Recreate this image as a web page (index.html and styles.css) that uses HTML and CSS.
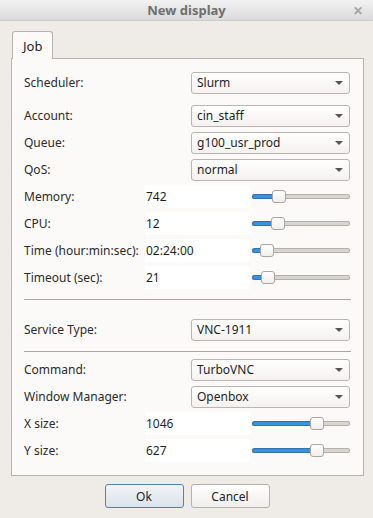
FILE: index.html
```html
<!DOCTYPE html>
<html lang="en">
<head>
  <meta charset="UTF-8">
  <title>New display</title>
  <link rel="stylesheet" href="styles.css">
</head>
<body>
  <div class="window">
    <div class="titlebar">
      <span class="title">New display</span>
      <span class="close">&#x2715;</span>
    </div>
    <div class="dialog">
      <div class="tabs">
        <div class="tab">Job</div>
      </div>
      <div class="panel">
        <div class="row first">
          <span class="label wide">Scheduler:</span>
          <div class="combo">Slurm<span class="arrow"></span></div>
        </div>
        <div class="row">
          <span class="label wide">Account:</span>
          <div class="combo">cin_staff<span class="arrow"></span></div>
        </div>
        <div class="row">
          <span class="label wide">Queue:</span>
          <div class="combo">g100_usr_prod<span class="arrow"></span></div>
        </div>
        <div class="row">
          <span class="label wide">QoS:</span>
          <div class="combo">normal<span class="arrow"></span></div>
        </div>
        <div class="row">
          <span class="label">Memory:</span>
          <div class="field">742</div>
          <div class="slider"><div class="fill" style="width:23px"></div><div class="handle"></div><div class="rest"></div></div>
        </div>
        <div class="row">
          <span class="label">CPU:</span>
          <div class="field">12</div>
          <div class="slider"><div class="fill" style="width:22px"></div><div class="handle"></div><div class="rest"></div></div>
        </div>
        <div class="row">
          <span class="label">Time (hour:min:sec):</span>
          <div class="field">02:24:00</div>
          <div class="slider"><div class="fill" style="width:11px"></div><div class="handle"></div><div class="rest"></div></div>
        </div>
        <div class="row">
          <span class="label">Timeout (sec):</span>
          <div class="field">21</div>
          <div class="slider"><div class="fill" style="width:12px"></div><div class="handle"></div><div class="rest"></div></div>
        </div>
        <div class="separator sep-top"></div>
        <div class="row">
          <span class="label wide">Service Type:</span>
          <div class="combo">VNC-1911<span class="arrow"></span></div>
        </div>
        <div class="separator sep-mid"></div>
        <div class="row">
          <span class="label wide">Command:</span>
          <div class="combo">TurboVNC<span class="arrow"></span></div>
        </div>
        <div class="row">
          <span class="label wide">Window Manager:</span>
          <div class="combo">Openbox<span class="arrow"></span></div>
        </div>
        <div class="row">
          <span class="label">X size:</span>
          <div class="field">1046</div>
          <div class="slider"><div class="fill" style="width:61px"></div><div class="handle"></div><div class="rest"></div></div>
        </div>
        <div class="row">
          <span class="label">Y size:</span>
          <div class="field">627</div>
          <div class="slider"><div class="fill" style="width:61px"></div><div class="handle"></div><div class="rest"></div></div>
        </div>
      </div>
      <div class="buttons">
        <button class="btn default">Ok</button>
        <button class="btn">Cancel</button>
      </div>
    </div>
  </div>
</body>
</html>
```

FILE: styles.css
```css
body, html {
  margin: 0;
  padding: 0;
  width: 373px;
  height: 518px;
  overflow: hidden;
  font-family: "Noto Sans", "Open Sans", sans-serif;
  font-size: 12px;
  color: #2e2e2e;
  background: #efece8;
}
.window {
  width: 373px;
  height: 518px;
  display: flex;
  flex-direction: column;
}
.titlebar {
  height: 21px;
  display: flex;
  align-items: center;
  justify-content: center;
  background: linear-gradient(#f2f2f2, #dadada);
  border-bottom: 1px solid #cfcdca;
  box-sizing: border-box;
  position: relative;
}
.title {
  font-weight: bold;
  font-size: 13px;
  color: #6f6f6f;
}
.close {
  position: absolute;
  right: 10px;
  top: 2px;
  font-size: 12px;
  font-weight: bold;
  color: #a3a3a3;
}
.dialog {
  padding: 10px 9px 0 11px;
}
.tabs {
  display: flex;
  padding-left: 1px;
  height: 27px;
}
.tab {
  width: 41px;
  box-sizing: border-box;
  border: 1px solid #b7b4af;
  border-bottom: none;
  border-radius: 3px 3px 0 0;
  background: #fcfaf8;
  padding: 5px 0 0 10px;
  font-size: 13px;
  color: #222;
  position: relative;
  z-index: 1;
  height: 28px;
}
.panel {
  width: 353px;
  height: 418px;
  box-sizing: border-box;
  border: 1px solid #b7b4af;
  background: #fcfaf8;
  padding: 10px 13px 0 12px;
  display: flex;
  flex-direction: column;
}
.row {
  height: 27px;
  display: flex;
  align-items: center;
}
.row.first {
  margin-bottom: 6px;
}
.label {
  width: 121px;
  flex-shrink: 0;
  color: #2b2b2b;
}
.label.wide {
  width: 167px;
}
.combo {
  width: 159px;
  height: 22px;
  box-sizing: border-box;
  border: 1px solid #b9b5b0;
  border-radius: 3px;
  background: linear-gradient(#ffffff, #f4f2ef);
  display: flex;
  align-items: center;
  padding-left: 5px;
  color: #1e1e1e;
}
.arrow {
  margin-left: auto;
  margin-right: 6px;
  width: 0;
  height: 0;
  border-left: 4px solid transparent;
  border-right: 4px solid transparent;
  border-top: 4px solid #555;
}
.field {
  width: 105px;
  height: 23px;
  background: #ffffff;
  display: flex;
  align-items: center;
  padding-left: 1px;
  box-sizing: border-box;
  color: #1e1e1e;
}
.slider {
  width: 98px;
  margin-left: 2px;
  display: flex;
  align-items: center;
}
.fill {
  height: 5px;
  box-sizing: border-box;
  background: #3c92d8;
  border: 1px solid #2f72ad;
  border-right: none;
  border-radius: 3px 0 0 3px;
  margin-right: -3px;
}
.handle {
  width: 14px;
  height: 13px;
  box-sizing: border-box;
  border: 1px solid #a9a5a0;
  border-radius: 3px;
  background: linear-gradient(#ffffff, #f1efec);
  position: relative;
  z-index: 1;
  flex-shrink: 0;
}
.rest {
  flex: 1;
  height: 5px;
  box-sizing: border-box;
  background: #d9d6d2;
  border: 1px solid #b3afaa;
  border-left: none;
  border-radius: 0 3px 3px 0;
  margin-left: -3px;
}
.separator {
  height: 1px;
  background: #aaa7a2;
  width: 327px;
}
.sep-top {
  margin: 8px 0 16px;
}
.sep-mid {
  margin: 8px 0 4px;
}
.buttons {
  display: flex;
  justify-content: center;
  gap: 7px;
  margin-top: 8px;
  padding-right: 1px;
}
.btn {
  width: 79px;
  height: 24px;
  font-family: "Noto Sans", "Open Sans", sans-serif;
  font-size: 12px;
  color: #222;
  border: 1px solid #b5b2ad;
  border-radius: 3px;
  background: linear-gradient(#ffffff, #f0eeeb);
  padding: 0;
}
.btn.default {
  border-color: #4d84b5;
  background: linear-gradient(#f1f4f7, #dbe3ea);
}
```
